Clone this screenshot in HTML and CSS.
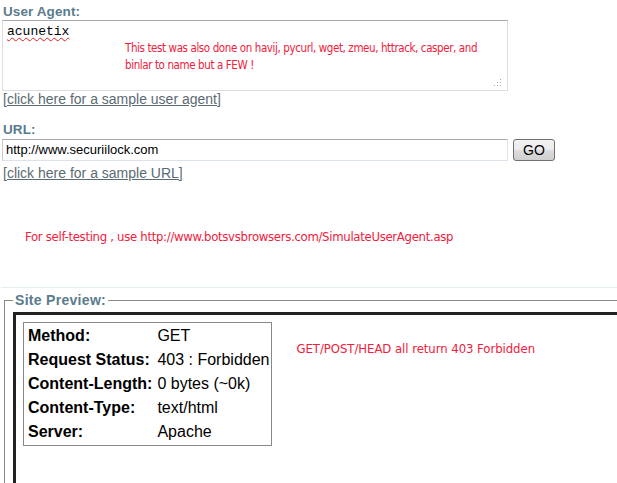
FILE: index.html
```html
<!DOCTYPE html>
<html>
<head>
<meta charset="utf-8">
<link rel="stylesheet" href="styles.css">
</head>
<body>
<div class="page">
  <div class="label">User Agent:</div>
  <div class="textarea">
    <span class="ua">acunetix</span>
    <p class="note">This test was also done on havij, pycurl, wget, zmeu, httrack, casper, and<br>binlar to name but a FEW !</p>
    <svg class="grip" width="8" height="8" viewBox="0 0 8 8"><g fill="#a8a8a8"><rect x="6" y="0" width="1" height="1"/><rect x="3" y="3" width="1" height="1"/><rect x="6" y="3" width="1" height="1"/><rect x="0" y="6" width="1" height="1"/><rect x="3" y="6" width="1" height="1"/><rect x="6" y="6" width="1" height="1"/></g></svg>
  </div>
  <a class="link" href="#">[click here for a sample user agent]</a>

  <div class="label url-label">URL:</div>
  <div class="url-row">
    <div class="input">http://www.securiilock.com</div>
    <div class="btn">GO</div>
  </div>
  <a class="link url-link" href="#">[click here for a sample URL]</a>

  <p class="self">For self-testing , use http://www.botsvsbrowsers.com/SimulateUserAgent.asp</p>

  <div class="sep"></div>

  <div class="fieldset">
    <div class="legend">Site Preview:</div>
    <div class="preview">
      <table class="info">
        <tr><th>Method:</th><td>GET</td></tr>
        <tr><th>Request Status:</th><td>403 : Forbidden</td></tr>
        <tr><th>Content-Length:</th><td>0 bytes (~0k)</td></tr>
        <tr><th>Content-Type:</th><td>text/html</td></tr>
        <tr><th>Server:</th><td>Apache</td></tr>
      </table>
      <p class="note2">GET/POST/HEAD all return 403 Forbidden</p>
    </div>
  </div>
</div>
</body>
</html>
```
FILE: styles.css
```css
html, body {
  margin: 0;
  padding: 0;
  background: #fff;
  overflow: hidden;
}
body {
  width: 617px;
  height: 483px;
  font-family: "Liberation Sans", Arial, sans-serif;
}
.page {
  padding: 0 0 0 2px;
}
.label {
  font-family: "Liberation Sans", Arial, sans-serif;
  font-weight: bold;
  font-size: 13.5px;
  line-height: 16px;
  color: #5a7c8c;
  padding: 4px 0 0 1px;
  height: 20px;
  box-sizing: border-box;
  letter-spacing: 0.1px;
}
.textarea {
  position: relative;
  width: 506px;
  height: 71px;
  box-sizing: border-box;
  border: 1px solid #dcdce4;
  border-top-color: #a9a9b2;
  padding: 3px 4px;
  font-size: 13px;
  line-height: 14px;
}
.ua {
  font-family: "Liberation Mono", "Courier New", monospace;
  font-size: 13px;
  line-height: 14px;
  text-decoration: underline wavy #e02020;
  text-decoration-thickness: 1px;
  text-underline-offset: 2px;
}
.note {
  margin: 1px 0 0 118px;
  font-family: "DejaVu Sans", sans-serif;
  font-stretch: condensed;
  font-size: 11.5px;
  letter-spacing: -0.4px;
  line-height: 17px;
  white-space: nowrap;
  color: #f0203c;
}
.grip {
  position: absolute;
  right: 5px;
  bottom: 3px;
}
.link {
  display: block;
  width: max-content;
  font-family: "Liberation Sans", Arial, sans-serif;
  font-size: 14px;
  line-height: 15px;
  color: #5b6b72;
  margin: 1px 0 0 1px;
  text-decoration: underline;
}
.url-label {
  margin-top: 11px;
}
.url-row {
  display: flex;
  align-items: flex-start;
  gap: 5px;
  margin-top: 1px;
}
.input {
  width: 506px;
  height: 22px;
  box-sizing: border-box;
  border: 1px solid #dde3ea;
  border-top-color: #a9a9a9;
  border-left-color: #c8ccd0;
  font-size: 13px;
  line-height: 20px;
  padding: 0 3px;
  color: #000;
}
.btn {
  width: 42px;
  height: 22px;
  box-sizing: border-box;
  border: 1px solid #707070;
  border-radius: 3px;
  background: linear-gradient(#f2f2f2 0%, #ebebeb 50%, #dddddd 51%, #cfcfcf 100%);
  font-size: 14px;
  line-height: 20px;
  text-align: center;
  color: #000;
}
.url-link {
  margin-top: 5px;
}
.self {
  margin: 48px 0 0 23px;
  font-family: "DejaVu Sans", sans-serif;
  font-stretch: condensed;
  font-size: 13px;
  letter-spacing: -0.3px;
  line-height: 16px;
  color: #f0203c;
}
.sep {
  margin: 42px 0 0 -1px;
  height: 1px;
  background: #e4eef0;
}
.fieldset {
  position: relative;
  margin: 12px 0 0 2px;
  border: 1px solid #888;
  border-right: none;
  border-bottom: none;
  height: 200px;
  padding: 11px 0 0 8px;
}
.legend {
  position: absolute;
  top: -8px;
  left: 8px;
  background: #fff;
  padding: 0 2px;
  font-weight: bold;
  font-size: 14px;
  letter-spacing: 0.3px;
  line-height: 15px;
  color: #5a7c8c;
}
.preview {
  display: flex;
  align-items: flex-start;
  border: 3px solid #222;
  border-right: none;
  border-bottom: none;
  padding: 7px 0 0 7px;
  height: 200px;
}
.info {
  border: 1px solid #888;
  border-collapse: separate;
  border-spacing: 0;
  padding: 1px 0 1px 2px;
  font-family: "Liberation Sans", Arial, sans-serif;
  font-size: 16px;
  color: #000;
}
.info th, .info td {
  height: 24px;
  padding: 0 2px;
  text-align: left;
  vertical-align: middle;
  white-space: nowrap;
}
.info th {
  font-weight: bold;
  padding-right: 2px;
}
.info td {
  padding-left: 3px;
}
.note2 {
  margin: 19px 0 0 24px;
  font-family: "DejaVu Sans", sans-serif;
  font-stretch: condensed;
  font-size: 13px;
  letter-spacing: -0.05px;
  line-height: 16px;
  color: #f0203c;
}
```
